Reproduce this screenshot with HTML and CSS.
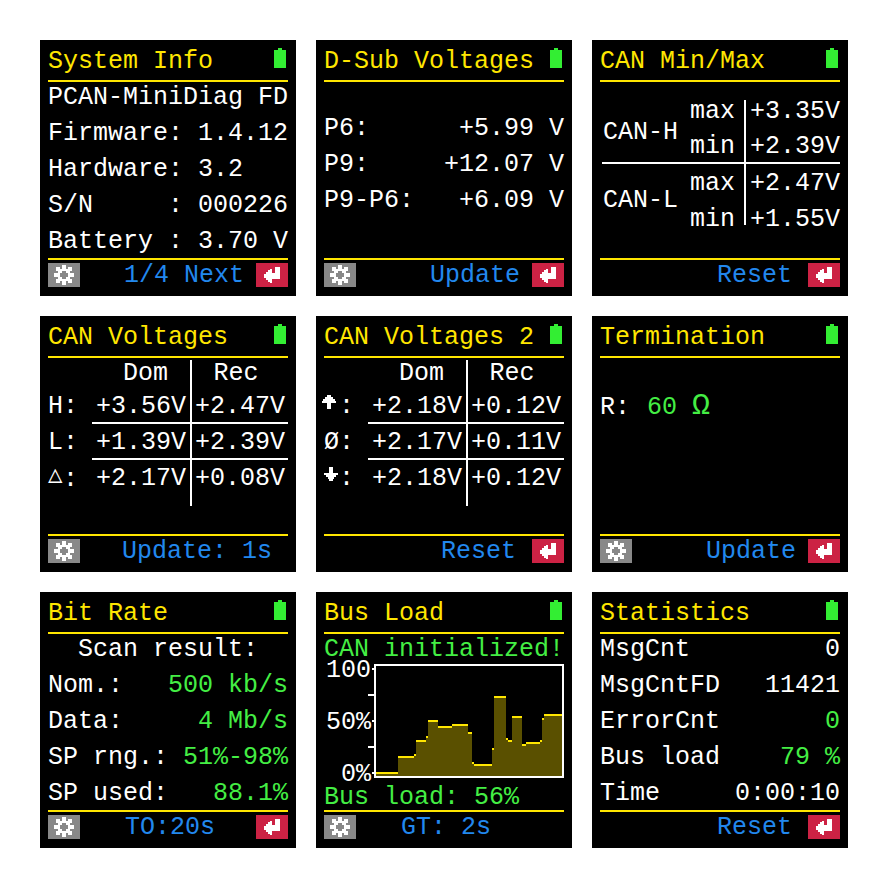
FILE: index.html
```html
<!DOCTYPE html>
<html lang="en">
<head>
    <meta charset="UTF-8">
    <meta name="viewport" content="width=device-width, initial-scale=1.0">
    <title>PCAN-MiniDiag FD Screens</title>
    <link rel="stylesheet" href="styles.css">
</head>
<body>

<!-- Softkey icons, used on every screen -->
<svg class="defs" aria-hidden="true">
    <symbol id="gear" viewBox="0 0 32 24">
        <path fill="#fff" d="M14 2h4v4h-4zM8 4h4v2H8zM20 4h4v2h-4zM8 6h16v2H8zM10 8h4v2h-4zM18 8h4v2h-4zM6 10h6v4H6zM20 10h6v4h-6zM10 14h4v2h-4zM18 14h4v2h-4zM8 16h16v2H8zM8 18h4v2H8zM20 18h4v2h-4zM14 18h4v4h-4z"/>
    </symbol>
    <symbol id="back" viewBox="0 0 32 24">
        <path fill="#fff" d="M8 11h2v4H8zM10 9h2v8h-2zM12 7h2v12h-2zM14 6h2v14h-2zM16 10h3v6h-3zM19 4h5v12h-5z"/>
    </symbol>
    <symbol id="up" viewBox="0 0 15 14" overflow="visible">
        <path fill="#fff" d="M3 0h4v2H3zM1 2h8v2H1zM-1 4h12v2H-1zM-2 6h14v2H-2zM3 8h4v6H3z"/>
    </symbol>
    <symbol id="down" viewBox="0 0 15 14" overflow="visible">
        <path fill="#fff" d="M5 0h4v6H5zM0 6h14v2H0zM2 8h10v2H2zM4 10h6v2H4zM5 12h4v2H5z"/>
    </symbol>
</svg>

<main class="screens">

    <section class="screen">
        <header class="head"><h2>System Info</h2><span class="battery"></span></header>
        <div class="rows">
            <div class="row">PCAN-MiniDiag FD</div>
            <div class="row">Firmware: 1.4.12</div>
            <div class="row">Hardware: 3.2</div>
            <div class="row">S/N     : 000226</div>
            <div class="row">Battery : 3.70 V</div>
        </div>
        <footer class="foot">
            <svg class="key key-gear"><use href="#gear"/></svg>
            <span class="soft soft-right">1/4 Next</span>
            <svg class="key key-back"><use href="#back"/></svg>
        </footer>
    </section>

    <section class="screen">
        <header class="head"><h2>D-Sub Voltages</h2><span class="battery"></span></header>
        <div class="rows rows-low">
            <div class="row"><span>P6:</span><span>+5.99 V</span></div>
            <div class="row"><span>P9:</span><span>+12.07 V</span></div>
            <div class="row"><span>P9-P6:</span><span>+6.09 V</span></div>
        </div>
        <footer class="foot">
            <svg class="key key-gear"><use href="#gear"/></svg>
            <span class="soft soft-right">Update</span>
            <svg class="key key-back"><use href="#back"/></svg>
        </footer>
    </section>

    <section class="screen">
        <header class="head"><h2>CAN Min/Max</h2><span class="battery"></span></header>
        <div class="body">
            <div class="minmax">
                <div class="mm-name mm-name-h">CAN-H</div>
                <div class="mm-k mm-r1">max</div><div class="mm-v mm-r1">+3.35V</div>
                <div class="mm-k mm-r2">min</div><div class="mm-v mm-r2">+2.39V</div>
                <div class="mm-name mm-name-l">CAN-L</div>
                <div class="mm-k mm-r3">max</div><div class="mm-v mm-r3">+2.47V</div>
                <div class="mm-k mm-r4">min</div><div class="mm-v mm-r4">+1.55V</div>
            </div>
        </div>
        <footer class="foot">
            <span class="soft soft-right soft-only">Reset</span>
            <svg class="key key-back"><use href="#back"/></svg>
        </footer>
    </section>

    <section class="screen">
        <header class="head"><h2>CAN Voltages</h2><span class="battery"></span></header>
        <div class="body">
            <div class="volts">
                <div></div><div class="v-dom v-title">Dom</div><div class="v-rec v-title">Rec</div>
                <div class="v-label">H:</div><div class="v-dom v-val v-line">+3.56V</div><div class="v-rec v-val v-line">+2.47V</div>
                <div class="v-label">L:</div><div class="v-dom v-val v-line">+1.39V</div><div class="v-rec v-val v-line">+2.39V</div>
                <div class="v-label"><span class="delta">△</span>:</div><div class="v-dom v-val">+2.17V</div><div class="v-rec v-val">+0.08V</div>
                <div></div><div class="v-dom"></div><div></div>
            </div>
        </div>
        <footer class="foot">
            <svg class="key key-gear"><use href="#gear"/></svg>
            <span class="soft soft-right soft-far">Update: 1s</span>
        </footer>
    </section>

    <section class="screen">
        <header class="head"><h2>CAN Voltages 2</h2><span class="battery"></span></header>
        <div class="body">
            <div class="volts">
                <div></div><div class="v-dom v-title">Dom</div><div class="v-rec v-title">Rec</div>
                <div class="v-label"><svg class="arrow"><use href="#up"/></svg>:</div><div class="v-dom v-val v-line">+2.18V</div><div class="v-rec v-val v-line">+0.12V</div>
                <div class="v-label">Ø:</div><div class="v-dom v-val v-line">+2.17V</div><div class="v-rec v-val v-line">+0.11V</div>
                <div class="v-label"><svg class="arrow"><use href="#down"/></svg>:</div><div class="v-dom v-val">+2.18V</div><div class="v-rec v-val">+0.12V</div>
                <div></div><div class="v-dom"></div><div></div>
            </div>
        </div>
        <footer class="foot">
            <span class="soft soft-right soft-only">Reset</span>
            <svg class="key key-back"><use href="#back"/></svg>
        </footer>
    </section>

    <section class="screen">
        <header class="head"><h2>Termination</h2><span class="battery"></span></header>
        <div class="rows">
            <div class="row-blank"></div>
            <div class="row row-left">R: <span class="ok ohm-value">60 <span class="ohm">Ω</span></span></div>
        </div>
        <footer class="foot">
            <svg class="key key-gear"><use href="#gear"/></svg>
            <span class="soft soft-right">Update</span>
            <svg class="key key-back"><use href="#back"/></svg>
        </footer>
    </section>

    <section class="screen">
        <header class="head"><h2>Bit Rate</h2><span class="battery"></span></header>
        <div class="rows">
            <div class="row">  Scan result:</div>
            <div class="row"><span>Nom.:</span><span class="ok">500 kb/s</span></div>
            <div class="row"><span>Data:</span><span class="ok">4 Mb/s</span></div>
            <div class="row"><span>SP rng.:</span><span class="ok">51%-98%</span></div>
            <div class="row"><span>SP used:</span><span class="ok">88.1%</span></div>
        </div>
        <footer class="foot">
            <svg class="key key-gear"><use href="#gear"/></svg>
            <span class="soft">TO:20s</span>
            <svg class="key key-back"><use href="#back"/></svg>
        </footer>
    </section>

    <section class="screen">
        <header class="head"><h2>Bus Load</h2><span class="battery"></span></header>
        <div class="body">
            <div class="row ok bus-status">CAN initialized!</div>
            <svg class="chart" viewBox="8 72 240 114">
                <text x="55" y="85">100</text>
                <text x="55" y="137">50%</text>
                <text x="55" y="189">0%</text>
                <path class="chart-fill" d="M60 184V180H82V164H98V162H100V148H110V144H112V128H122V134H136V132H152V140H156V170H158V172H176V156H178V104H190V146H192V148H196V124H206V152H210V150H224V148H226V126H228V122H246V184Z"/>
                <path class="chart-line" d="M60 181H82M82 165H98M98 163H100M100 149H110M110 145H112M112 129H122M122 135H136M136 133H152M152 141H156M156 171H158M158 173H176M176 157H178M178 105H190M190 147H192M192 149H196M196 125H206M206 153H210M210 151H224M224 149H226M226 127H228M228 123H246"/>
                <path class="chart-axis" d="M56 77H58M52 103H58M56 129H58M52 155H58M56 181H58"/>
                <rect class="chart-box" x="59" y="73" width="188" height="112"/>
            </svg>
            <div class="row ok">Bus load: 56%</div>
        </div>
        <footer class="foot">
            <svg class="key key-gear"><use href="#gear"/></svg>
            <span class="soft">GT: 2s</span>
            <span class="key"></span>
        </footer>
    </section>

    <section class="screen">
        <header class="head"><h2>Statistics</h2><span class="battery"></span></header>
        <div class="rows">
            <div class="row"><span>MsgCnt</span><span>0</span></div>
            <div class="row"><span>MsgCntFD</span><span>11421</span></div>
            <div class="row"><span>ErrorCnt</span><span class="ok">0</span></div>
            <div class="row"><span>Bus load</span><span class="ok">79 %</span></div>
            <div class="row"><span>Time</span><span>0:00:10</span></div>
        </div>
        <footer class="foot">
            <span class="soft soft-right soft-only">Reset</span>
            <svg class="key key-back"><use href="#back"/></svg>
        </footer>
    </section>

</main>

</body>
</html>
```

FILE: styles.css
```css
body {
    margin: 0;
    background-color: #ffffff;
    font-family: "Liberation Mono", "DejaVu Sans Mono", monospace;
    font-size: 25px;
    color: #ffffff;
}
.defs {
    display: none;
}
.screens {
    display: grid;
    grid-template-columns: repeat(3, 256px);
    grid-auto-rows: 256px;
    gap: 20px;
    padding: 40px;
}
.screen {
    display: flex;
    flex-direction: column;
    background-color: #000000;
    padding: 0 8px;
}
/* Title bar */
.head {
    display: flex;
    justify-content: space-between;
    box-sizing: border-box;
    height: 42px;
    padding-top: 7px;
    border-bottom: 2px solid #ffe600;
}
.head h2 {
    margin: 0;
    font-size: 25px;
    font-weight: normal;
    line-height: 30px;
    color: #ffe600;
    white-space: pre;
}
.battery {
    width: 12px;
    height: 18px;
    margin: 3px 2px 0 0;
    background-color: #33ee33;
    position: relative;
}
.battery::before {
    content: "";
    position: absolute;
    left: 4px;
    top: -2px;
    width: 4px;
    height: 2px;
    background-color: #33ee33;
}
/* Body */
.body,
.rows {
    height: 176px;
}
.rows {
    display: flex;
    flex-direction: column;
    gap: 7px;
    box-sizing: border-box;
    padding-top: 1px;
}
.rows-low {
    padding-top: 32px;
}
.row {
    display: flex;
    justify-content: space-between;
    height: 29px;
    line-height: 29px;
    white-space: pre;
}
.row:not(:has(span)) {
    display: block;
}
.row-left {
    justify-content: flex-start;
}
.row-blank {
    height: 27px;
}
.ok {
    color: #44ee44;
}
.ohm-value {
    margin-left: 2px;
}
.ohm {
    font-size: 30px;
    line-height: 20px;
}
/* Voltage tables */
.volts {
    display: grid;
    grid-template-columns: 44px 100px 96px;
    grid-template-rows: 28px 36px 36px 36px 10px;
    margin-top: 2px;
    text-align: center;
}
.v-dom {
    border-right: 2px solid #ffffff;
}
.v-title {
    line-height: 27px;
}
.v-dom.v-title {
    padding-left: 9px;
}
.v-rec.v-title {
    padding-right: 8px;
}
.v-val,
.v-label {
    box-sizing: border-box;
    padding-top: 4px;
    line-height: 30px;
    white-space: pre;
}
.v-label {
    text-align: left;
}
.v-line {
    border-bottom: 2px solid #ffffff;
}
.delta {
    display: inline-block;
    width: 15px;
    font-family: "DejaVu Sans Mono", monospace;
    font-size: 24px;
    line-height: 20px;
    vertical-align: 4px;
}
.arrow {
    width: 15px;
    height: 14px;
    overflow: visible;
    vertical-align: 4px;
}
/* CAN min/max table */
.minmax {
    display: grid;
    grid-template-columns: 88px 56px 94px;
    grid-template-rows: 27px 37px 36px 25px;
    margin: 18px 0 0 2px;
}
.mm-name {
    grid-column: 1;
    padding-left: 1px;
}
.mm-name-h {
    grid-row: 1 / span 2;
    align-self: stretch;
    line-height: 65px;
    border-bottom: 2px solid #ffffff;
}
.mm-name-l {
    grid-row: 3 / span 2;
    line-height: 74px;
}
.mm-k {
    grid-column: 2;
    box-sizing: border-box;
    border-right: 2px solid #ffffff;
}
.mm-v {
    grid-column: 3;
    text-align: right;
}
.mm-r1 {
    line-height: 23px;
}
.mm-r2 {
    box-sizing: border-box;
    padding-top: 3px;
    line-height: 34px;
    border-bottom: 2px solid #ffffff;
}
.mm-r3 {
    line-height: 40px;
}
.mm-r4 {
    line-height: 39px;
}
/* Bus load chart */
.bus-status {
    margin-top: 1px;
}
.chart {
    display: block;
    width: 240px;
    height: 114px;
    overflow: visible;
    shape-rendering: crispEdges;
}
.chart text {
    fill: #ffffff;
    font-size: 25px;
    text-anchor: end;
}
.chart-fill {
    fill: #5a5000;
}
.chart-line {
    fill: none;
    stroke: #ffe600;
    stroke-width: 2;
}
.chart-axis {
    fill: none;
    stroke: #ffffff;
    stroke-width: 2;
}
.chart-box {
    fill: none;
    stroke: #ffffff;
    stroke-width: 2;
}
.chart + .row {
    margin-top: 5px;
}
/* Softkeys */
.foot {
    display: flex;
    align-items: center;
    flex: 1;
    border-top: 2px solid #ffe600;
    padding-bottom: 8px;
    padding-top: 2px;
}
.key {
    width: 32px;
    height: 24px;
    flex: none;
}
.key-gear {
    background-color: #888888;
}
.key-back {
    background-color: #cc2244;
}
.soft {
    flex: 1;
    text-align: center;
    line-height: 26px;
    height: 24px;
    color: #2288ee;
    padding-left: 4px;
}
.soft-right {
    text-align: right;
    padding-right: 12px;
}
.soft-only {
    padding-right: 16px;
}
.soft-far {
    padding-right: 16px;
}
```
